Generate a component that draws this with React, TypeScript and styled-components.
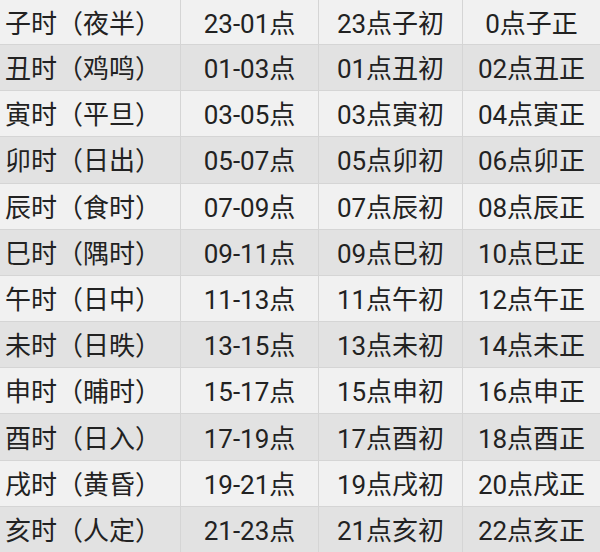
import React from "react";
import styled, { createGlobalStyle } from "styled-components";

const Global = createGlobalStyle`
  html, body { margin: 0; padding: 0; background: #f1f1f1; }
  body { font-family: Roboto, "Noto Sans CJK SC", "Noto Sans", sans-serif; }
`;

const Table = styled.div`
  width: 600px;
  height: 552px;
  display: grid;
  grid-template-rows: 44px repeat(11, 1fr);
  overflow: hidden;
`;

const Row = styled.div<{ $dark: boolean; $first: boolean }>`
  display: grid;
  grid-template-columns: 180px 138px 144px 138px;
  background: ${(p) => (p.$dark ? "#e2e2e2" : "#f1f1f1")};
  border-top: ${(p) => (p.$first ? "none" : "1px solid #d5d5d5")};
`;

const Cell = styled.div<{ $left?: boolean }>`
  display: flex;
  align-items: center;
  justify-content: ${(p) => (p.$left ? "flex-start" : "center")};
  padding-left: ${(p) => (p.$left ? "5px" : "0")};
  padding-top: 3px;
  border-left: ${(p) => (p.$left ? "none" : "1px solid #d5d5d5")};
  font-size: 26px;
  color: #222222;
  white-space: nowrap;
  line-height: 1;
`;

const data: [string, string, string, string][] = [
  ["子时（夜半）", "23-01点", "23点子初", "0点子正"],
  ["丑时（鸡鸣）", "01-03点", "01点丑初", "02点丑正"],
  ["寅时（平旦）", "03-05点", "03点寅初", "04点寅正"],
  ["卯时（日出）", "05-07点", "05点卯初", "06点卯正"],
  ["辰时（食时）", "07-09点", "07点辰初", "08点辰正"],
  ["巳时（隅时）", "09-11点", "09点巳初", "10点巳正"],
  ["午时（日中）", "11-13点", "11点午初", "12点午正"],
  ["未时（日昳）", "13-15点", "13点未初", "14点未正"],
  ["申时（晡时）", "15-17点", "15点申初", "16点申正"],
  ["酉时（日入）", "17-19点", "17点酉初", "18点酉正"],
  ["戌时（黄昏）", "19-21点", "19点戌初", "20点戌正"],
  ["亥时（人定）", "21-23点", "21点亥初", "22点亥正"],
];

export default function App() {
  return (
    <>
      <Global />
      <Table>
        {data.map((r, i) => (
          <Row key={i} $dark={i % 2 === 1} $first={i === 0}>
            <Cell $left>{r[0]}</Cell>
            <Cell>{r[1]}</Cell>
            <Cell>{r[2]}</Cell>
            <Cell>{r[3]}</Cell>
          </Row>
        ))}
      </Table>
    </>
  );
}
